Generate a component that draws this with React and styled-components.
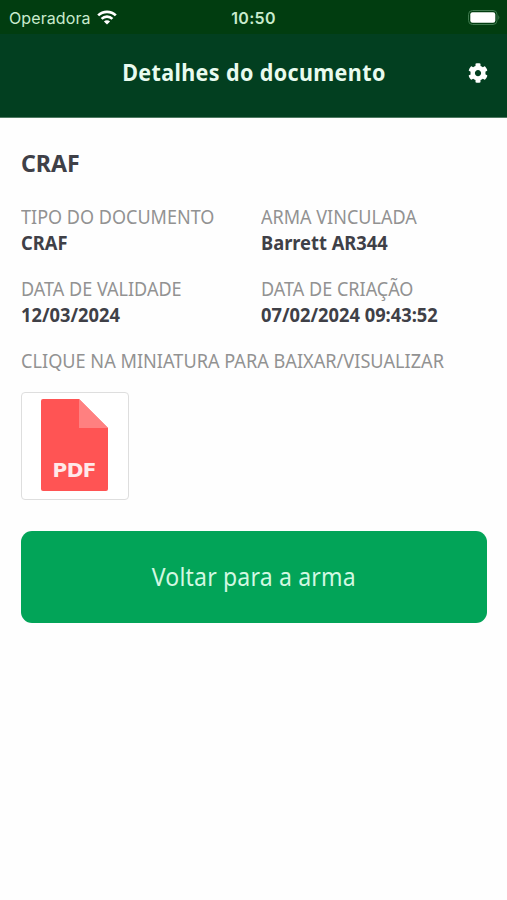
import styled, { createGlobalStyle } from 'styled-components';
import { FaCog } from 'react-icons/fa';

const GlobalStyle = createGlobalStyle`
  *, *::before, *::after {
    box-sizing: border-box;
  }

  body {
    margin: 0;
    background-color: #fefefe;
    font-family: 'Noto Sans', sans-serif;
    color: #3f4047;
  }
`;

const StyledWrapper = styled.div`
  min-height: 900px;
  background-color: #fefefe;
`;

const StyledStatusBar = styled.div`
  display: grid;
  grid-template-columns: 1fr auto 1fr;
  align-items: center;
  height: 34px;
  padding: 1px 7px 0 9px;
  background-color: #013d10;
  color: #c9ebcd;
  font-family: Inter, sans-serif;
  font-size: 16px;
  line-height: 20px;
`;

const StyledCarrier = styled.div`
  display: flex;
  align-items: center;
  gap: 6px;
  letter-spacing: 0.1px;
`;

const StyledTime = styled.div`
  padding-right: 2px;
  font-weight: 600;
  letter-spacing: 0.3px;
`;

const StyledBattery = styled.svg`
  justify-self: end;
  display: block;
`;

const StyledHeader = styled.header`
  display: grid;
  grid-template-columns: 1fr auto 1fr;
  align-items: center;
  height: 84px;
  padding: 0 19px 7px;
  background-color: #023f20;
  border-bottom: 1px solid #4f7a62;
  color: #e9fbef;
`;

const StyledTitle = styled.h1`
  grid-column: 2;
  margin: 0;
  font-size: 23px;
  line-height: 30px;
  font-weight: 700;
  letter-spacing: 0.4px;
  transform: scaleX(0.935);
`;

const StyledSettingsButton = styled.button`
  justify-self: end;
  display: flex;
  padding: 1px 0 0;
  border: none;
  background: none;
  color: #ffffff;
`;

const StyledContent = styled.main`
  padding: 28px 20px 0 21px;
`;

const StyledHeading = styled.h2`
  margin: 0 0 25px;
  font-size: 24px;
  line-height: 33px;
  font-weight: 700;
  transform: scaleX(0.965);
  transform-origin: left;
`;

const StyledGrid = styled.div`
  display: grid;
  grid-template-columns: 240px 1fr;
  row-gap: 20px;
  margin-bottom: 20px;
`;

const StyledLabel = styled.div`
  color: #929292;
  font-size: 19px;
  line-height: 26px;
  white-space: nowrap;
  transform: scaleX(${({ $wide }) => ($wide ? 0.955 : 0.949)});
  transform-origin: left;
`;

const StyledValue = styled.div`
  font-size: 19px;
  line-height: 26px;
  font-weight: 700;
  transform: scaleX(0.963);
  transform-origin: left;
`;

const StyledThumbnail = styled.div`
  display: flex;
  align-items: center;
  justify-content: center;
  width: 108px;
  height: 108px;
  margin: 18px 0 31px;
  padding-bottom: 3px;
  border: 1px solid #dedede;
  border-radius: 4px;
  background-color: #ffffff;
`;

const StyledBackButton = styled.button`
  display: block;
  width: 100%;
  height: 92px;
  padding: 0 0 3px;
  border: none;
  border-radius: 11px;
  background-color: #02a458;
  color: #d2f8e2;
  font-family: inherit;
  font-size: 25px;
`;

const StyledButtonLabel = styled.span`
  display: inline-block;
  letter-spacing: 0.2px;
  transform: scaleX(0.921);
`;

const details = [
  { label: 'TIPO DO DOCUMENTO', value: 'CRAF' },
  { label: 'ARMA VINCULADA', value: 'Barrett AR344' },
  { label: 'DATA DE VALIDADE', value: '12/03/2024' },
  { label: 'DATA DE CRIAÇÃO', value: '07/02/2024 09:43:52' },
];

const WifiIcon = () => (
  <svg width="20" height="15" viewBox="0 0 20 15" fill="none" stroke="#fff" strokeWidth="2.7">
    <path d="M1.2 5.4a12.6 12.6 0 0 1 17.6 0" />
    <path d="M4.6 8.9a7.7 7.7 0 0 1 10.8 0" />
    <path d="M10 14.6 6.9 11.5a4.4 4.4 0 0 1 6.2 0Z" fill="#fff" stroke="none" />
  </svg>
);

const BatteryIcon = () => (
  <StyledBattery width="33" height="16" viewBox="0 0 33 16">
    <rect x="1.5" y="0.5" width="28.5" height="14" rx="4" fill="none" stroke="#3f7a4e" />
    <rect x="3.3" y="2.3" width="25" height="10.4" rx="2.2" fill="#fff" />
    <path d="M31.3 5q2 2.5 0 5z" fill="#3f7a4e" />
  </StyledBattery>
);

const PdfIcon = () => (
  <svg width="68" height="94" viewBox="0 0 68 94">
    <path d="M2 1H38L67 30V91Q67 93 65 93H2Q0 93 0 91V3Q0 1 2 1Z" fill="#ff5454" />
    <path d="M38 1 67 30H38Z" fill="#ff8080" />
    <text
      x="33.5"
      y="79"
      textAnchor="middle"
      textLength="44"
      fontFamily="'DejaVu Sans', sans-serif"
      fontSize="20"
      fontWeight="700"
      fill="#ffe9e9"
    >
      PDF
    </text>
  </svg>
);

const Detail = ({ label, value }) => (
  <div>
    <StyledLabel>{label}</StyledLabel>
    <StyledValue>{value}</StyledValue>
  </div>
);

const App = () => (
  <StyledWrapper>
    <GlobalStyle />
    <StyledStatusBar>
      <StyledCarrier>
        Operadora
        <WifiIcon />
      </StyledCarrier>
      <StyledTime>10:50</StyledTime>
      <BatteryIcon />
    </StyledStatusBar>
    <StyledHeader>
      <StyledTitle>Detalhes do documento</StyledTitle>
      <StyledSettingsButton>
        <FaCog size={20} />
      </StyledSettingsButton>
    </StyledHeader>
    <StyledContent>
      <StyledHeading>CRAF</StyledHeading>
      <StyledGrid>
        {details.map(({ label, value }) => (
          <Detail key={label} label={label} value={value} />
        ))}
      </StyledGrid>
      <StyledLabel $wide>CLIQUE NA MINIATURA PARA BAIXAR/VISUALIZAR</StyledLabel>
      <StyledThumbnail>
        <PdfIcon />
      </StyledThumbnail>
      <StyledBackButton>
        <StyledButtonLabel>Voltar para a arma</StyledButtonLabel>
      </StyledBackButton>
    </StyledContent>
  </StyledWrapper>
);

export default App;
